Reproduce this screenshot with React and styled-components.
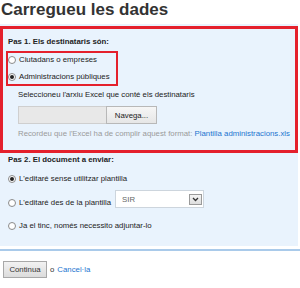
import React from "react"
import styled, { createGlobalStyle } from "styled-components"

const Global = createGlobalStyle`
  body {
    margin: 0;
    background: #fff;
    font-family: "Liberation Sans", Arial, sans-serif;
    color: #222;
  }
`

const Title = styled.h1`
  margin: 0;
  padding-left: 1px;
  font-size: 17px;
  line-height: 20px;
  font-weight: bold;
  color: #333;
`

const Panel = styled.div`
  margin: 4px 2px 0 0;
  padding: 2px 0 15px 0;
  background: #e9f3fd;
`

const RedBox = styled.div`
  border: 3px solid #e4202c;
  padding: 8px 0 11px 5px;
`

const Text = styled.div`
  font-size: 7.8px;
  line-height: 10px;
  white-space: nowrap;
  color: ${p => p.$muted ? "#9a9a9a" : "#222"};
  font-weight: ${p => p.$bold ? "bold" : "normal"};
  margin-top: ${p => p.$top || 0}px;
  padding-left: ${p => p.$indent || 0}px;
`

const Highlight = styled.div`
  box-sizing: border-box;
  width: 112px;
  margin: 4px 0 0 -2px;
  padding: 2px 0;
  border: 2px solid #e4202c;
  display: flex;
  flex-direction: column;
  gap: 7px;
`

const Option = styled.label`
  display: flex;
  align-items: center;
  gap: 3px;
  font-size: 7.8px;
  line-height: 10px;
  white-space: nowrap;
  color: #222;
`

const Radio = styled.span`
  box-sizing: border-box;
  width: 8px;
  height: 8px;
  border-radius: 50%;
  border: 1px solid #8a8a8a;
  background: #fff;
  display: flex;
  align-items: center;
  justify-content: center;
  flex: none;

  &::after {
    content: "";
    width: 4px;
    height: 4px;
    border-radius: 50%;
    background: ${p => p.$checked ? "#222" : "transparent"};
  }
`

const FileRow = styled.div`
  display: flex;
  margin: 6px 0 0 10px;
  height: 18px;
`

const FileField = styled.div`
  box-sizing: border-box;
  width: 88px;
  border: 1px solid #cfcfcf;
  border-right: none;
  background: #e8e8e8;
`

const Browse = styled.button`
  box-sizing: border-box;
  width: 51px;
  margin: 0;
  padding: 0;
  border: 1px solid #b8b8b8;
  background: linear-gradient(#f6f6f6, #e6e6e6);
  font-family: inherit;
  font-size: 7.8px;
  color: #222;
`

const Link = styled.a`
  color: #1b74cf;
  text-decoration: none;
`

const Choices = styled.div`
  padding-left: 8px;
  margin-top: 9px;
  display: flex;
  flex-direction: column;
`

const ChoiceRow = styled.div`
  display: flex;
  align-items: flex-end;
  margin-top: ${p => p.$top || 0}px;
`

const Select = styled.div`
  box-sizing: border-box;
  width: 89px;
  height: 18px;
  margin-left: 4px;
  padding: 0 1px 0 6px;
  border: 1px solid #cdd5dd;
  background: #fff;
  display: flex;
  align-items: center;
  justify-content: space-between;
  font-size: 7.8px;
  color: #666;
`

const Arrow = styled.span`
  box-sizing: border-box;
  width: 13px;
  height: 11px;
  border: 1px solid #9a9a9a;
  background: linear-gradient(#f4f4f4, #dedede);
  display: flex;
  align-items: center;
  justify-content: center;
`

const Rule = styled.div`
  margin-top: 3px;
  border-top: 2px solid #a9caea;
`

const Footer = styled.div`
  display: flex;
  align-items: center;
  gap: 3px;
  margin-top: 10px;
  padding-left: 3px;
  font-size: 7.8px;
  color: #333;
`

const Submit = styled.button`
  box-sizing: border-box;
  width: 44px;
  height: 17px;
  margin: 0;
  padding: 0;
  border: 1px solid #a8a8a8;
  background: linear-gradient(#f2f2f2, #dcdcdc);
  font-family: inherit;
  font-size: 7.8px;
  color: #333;
`

export default function App() {
  return (
    <>
      <Global />
      <Title>Carregueu les dades</Title>
      <Panel>
        <RedBox>
          <Text $bold>Pas 1. Els destinataris són:</Text>
          <Highlight>
            <Option><Radio />Ciutadans o empreses</Option>
            <Option><Radio $checked />Administracions públiques</Option>
          </Highlight>
          <Text $top={4} $indent={10}>Seleccioneu l'arxiu Excel que conté els destinataris</Text>
          <FileRow>
            <FileField />
            <Browse>Navega...</Browse>
          </FileRow>
          <Text $top={5} $indent={10} $muted>
            Recordeu que l'Excel ha de complir aquest format: <Link href="#">Plantilla administracions.xls</Link>
          </Text>
        </RedBox>
        <Text $bold $top={2} $indent={8}>Pas 2. El document a enviar:</Text>
        <Choices>
          <ChoiceRow>
            <Option><Radio $checked />L'editaré sense utilitzar plantilla</Option>
          </ChoiceRow>
          <ChoiceRow $top={6}>
            <Option><Radio />L'editaré des de la plantilla</Option>
            <Select>
              SIR
              <Arrow>
                <svg width="7" height="5" viewBox="0 0 7 5">
                  <path d="M1 1l2.5 2.5L6 1" fill="none" stroke="#333" strokeWidth="1.3" />
                </svg>
              </Arrow>
            </Select>
          </ChoiceRow>
          <ChoiceRow $top={13}>
            <Option><Radio />Ja el tinc, només necessito adjuntar-lo</Option>
          </ChoiceRow>
        </Choices>
      </Panel>
      <Rule />
      <Footer>
        <Submit>Continua</Submit>
        o <Link href="#">Cancel·la</Link>
      </Footer>
    </>
  )
}
